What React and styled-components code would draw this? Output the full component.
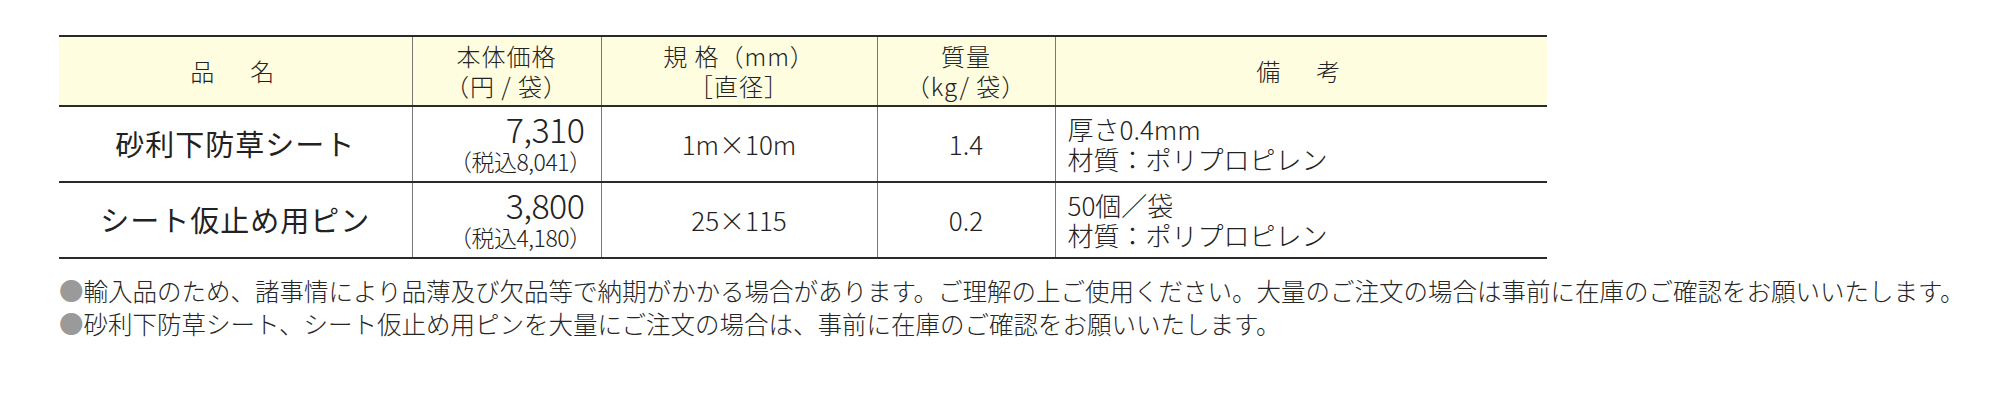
import React from 'react';
import styled, { createGlobalStyle } from 'styled-components';

const GlobalStyle = createGlobalStyle`
  * {
    margin: 0;
    padding: 0;
    box-sizing: border-box;
  }

  body {
    font-family: 'Noto Sans CJK JP', 'Noto Sans', sans-serif;
    font-weight: 300;
    background: #ffffff;
    color: #222222;
  }
`;

const Page = styled.div`
  padding: 35px 0 0 59px;
  width: 1998px;
  height: 407px;
`;

const Table = styled.table`
  width: 1488px;
  border-collapse: collapse;
  table-layout: fixed;
  border-top: 2px solid #2a2a2a;
  border-bottom: 2px solid #2a2a2a;
`;

const HeadCell = styled.th`
  height: 70px;
  background: #fffde0;
  font-weight: 300;
  font-size: 24px;
  line-height: 30px;
  letter-spacing: ${props => props.$spaced ? '6px' : '1px'};
  color: #222;
  text-align: center;
  vertical-align: middle;
  border-bottom: 2px solid #2a2a2a;
  border-left: 1px solid #777;
  &:first-child {
    border-left: none;
  }
`;

const Row = styled.tr`
  & + & td {
    border-top: 2px solid #2a2a2a;
  }
`;

const Cell = styled.td`
  height: 76px;
  vertical-align: middle;
  text-align: ${props => props.$align || 'center'};
  padding: ${props => props.$pad || '0'};
  font-size: 26px;
  line-height: 30px;
  color: #222;
  border-left: 1px solid #777;
  &:first-child {
    border-left: none;
  }
`;

const ProductName = styled.span`
  font-size: 29px;
  font-weight: 400;
  letter-spacing: 1px;
`;

const Price = styled.div`
  font-size: 34px;
  line-height: 34px;
  letter-spacing: -0.5px;
`;

const TaxIncl = styled.div`
  font-size: 23px;
  line-height: 30px;
  margin-right: -7px;
  letter-spacing: -0.5px;
`;

const Notes = styled.ul`
  list-style: none;
  margin-top: 15px;
`;

const Note = styled.li`
  display: flex;
  font-size: 24.5px;
  line-height: 33px;
  color: #262626;
  white-space: nowrap;
`;

const Bullet = styled.span`
  color: #9a9a9a;
`;

const rows = [
  {
    name: '砂利下防草シート',
    price: '7,310',
    tax: '（税込8,041）',
    spec: '1m×10m',
    weight: '1.4',
    notes: ['厚さ0.4mm', '材質：ポリプロピレン'],
  },
  {
    name: 'シート仮止め用ピン',
    price: '3,800',
    tax: '（税込4,180）',
    spec: '25×115',
    weight: '0.2',
    notes: ['50個／袋', '材質：ポリプロピレン'],
  },
];

const App = () => (
  <>
    <GlobalStyle />
    <Page>
      <Table>
        <colgroup>
          <col style={{ width: 353 }} />
          <col style={{ width: 189 }} />
          <col style={{ width: 276 }} />
          <col style={{ width: 178 }} />
          <col style={{ width: 492 }} />
        </colgroup>
        <thead>
          <tr>
            <HeadCell $spaced>品　名</HeadCell>
            <HeadCell>本体価格<br />（円 / 袋）</HeadCell>
            <HeadCell>規 格（mm）<br />［直径］</HeadCell>
            <HeadCell>質量<br />（kg/ 袋）</HeadCell>
            <HeadCell $spaced>備　考</HeadCell>
          </tr>
        </thead>
        <tbody>
          {rows.map(r => (
            <Row key={r.name}>
              <Cell><ProductName>{r.name}</ProductName></Cell>
              <Cell $align="right" $pad="0 16px 0 0">
                <Price>{r.price}</Price>
                <TaxIncl>{r.tax}</TaxIncl>
              </Cell>
              <Cell>{r.spec}</Cell>
              <Cell>{r.weight}</Cell>
              <Cell $align="left" $pad="0 0 0 12px">
                {r.notes[0]}<br />{r.notes[1]}
              </Cell>
            </Row>
          ))}
        </tbody>
      </Table>
      <Notes>
        <Note><Bullet>●</Bullet>輸入品のため、諸事情により品薄及び欠品等で納期がかかる場合があります。ご理解の上ご使用ください。大量のご注文の場合は事前に在庫のご確認をお願いいたします。</Note>
        <Note><Bullet>●</Bullet>砂利下防草シート、シート仮止め用ピンを大量にご注文の場合は、事前に在庫のご確認をお願いいたします。</Note>
      </Notes>
    </Page>
  </>
);

export default App;
